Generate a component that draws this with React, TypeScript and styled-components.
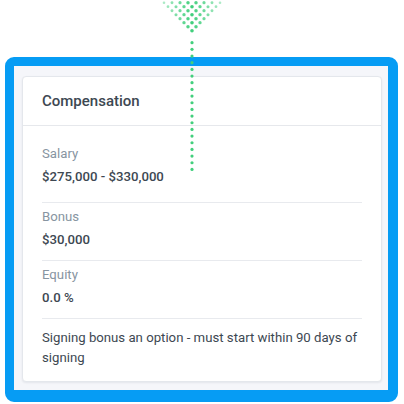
import React from "react";
import styled, { createGlobalStyle } from "styled-components";

const Global = createGlobalStyle`
  html, body { margin: 0; padding: 0; background: #ffffff; }
  body { font-family: Roboto, "Liberation Sans", sans-serif; -webkit-font-smoothing: antialiased; }
`;

const Page = styled.div`
  position: relative;
  width: 404px;
  height: 404px;
  overflow: hidden;
  padding: 57px 0 0 5px;
  box-sizing: border-box;
`;

const Frame = styled.div`
  width: 393px;
  box-sizing: border-box;
  border-style: solid;
  border-color: #069cf4;
  border-width: 9px 10px 12px 9px;
  border-radius: 9px;
  background: #f5f6fa;
  padding: 10px 6px 8px 8px;
`;

const Card = styled.div`
  background: #ffffff;
  border: 1px solid #e4e7ec;
  border-radius: 4px;
  box-shadow: 0 1px 2px rgba(30, 40, 60, 0.08);
`;

const Header = styled.div`
  height: 48px;
  display: flex;
  align-items: center;
  padding: 0 19px;
  border-bottom: 1px solid #e6e8ec;
  font-size: 15px;
  font-weight: 500;
  color: #3d4852;
`;

const Body = styled.div`
  padding: 14px 19px 0;
`;

const Item = styled.div<{ $first?: boolean }>`
  padding: 4px 0 ${(p) => (p.$first ? "15px" : "10px")};
  border-top: ${(p) => (p.$first ? "none" : "1px solid #e8eaee")};
`;

const Label = styled.div`
  font-size: 13.2px;
  line-height: 20px;
  color: #8795a1;
`;

const Value = styled.div`
  margin-top: 3px;
  font-size: 13.2px;
  line-height: 20px;
  font-weight: 500;
  color: #3d4852;
`;

const Note = styled.div`
  border-top: 1px solid #e8eaee;
  padding: 9px 0 13px;
  font-size: 13.2px;
  line-height: 20px;
  color: #3d4852;
`;

const Dots = styled.svg`
  position: absolute;
  left: 0;
  top: 0;
  pointer-events: none;
`;

const GREEN = "#42cf7d";

function Arrow() {
  const dots: React.ReactNode[] = [];
  const apexX = 192;
  const apexY = 30.7;
  for (let r = 0; r < 8; r++) {
    const y = apexY - r * 4;
    for (let k = 0; k <= r; k++) {
      const x = apexX - r * 4 + k * 8;
      const off = Math.abs(x - apexX) / 4;
      const size = Math.max(1.1, 1.8 - off * 0.07);
      const op = Math.max(0.4, 1 - off * 0.08);
      dots.push(<circle key={`t${r}-${k}`} cx={x} cy={y} r={size} fill={GREEN} opacity={op} />);
    }
  }
  for (let i = 0; i < 20; i++) {
    dots.push(<circle key={`l${i}`} cx={192} cy={42.7 + i * 6.67} r={1.6} fill={GREEN} />);
  }
  return (
    <Dots width="404" height="404" viewBox="0 0 404 404">
      {dots}
    </Dots>
  );
}

export default function App() {
  return (
    <>
      <Global />
      <Page>
        <Frame>
          <Card>
            <Header>Compensation</Header>
            <Body>
              <Item $first>
                <Label>Salary</Label>
                <Value>$275,000 - $330,000</Value>
              </Item>
              <Item>
                <Label>Bonus</Label>
                <Value>$30,000</Value>
              </Item>
              <Item>
                <Label>Equity</Label>
                <Value>0.0 %</Value>
              </Item>
              <Note>Signing bonus an option - must start within 90 days of signing</Note>
            </Body>
          </Card>
        </Frame>
        <Arrow />
      </Page>
    </>
  );
}
